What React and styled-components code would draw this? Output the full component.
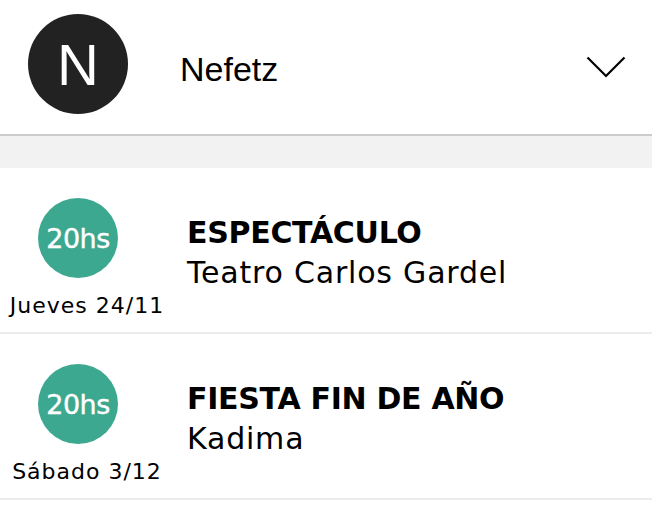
import styled, { createGlobalStyle } from "styled-components";

const GlobalStyle = createGlobalStyle`
  body {
    margin: 0;
    background: #ffffff;
    font-family: "DejaVu Sans", "Liberation Sans", sans-serif;
    color: #000;
  }
`;

const Page = styled.div`
  width: 652px;
  min-height: 522px;
  background: #fff;
  overflow: hidden;
`;

const Header = styled.header`
  height: 136px;
  box-sizing: border-box;
  display: flex;
  align-items: center;
  padding: 0 26px 0 28px;
  border-bottom: 2px solid #cccccc;
`;

const Avatar = styled.div`
  width: 100px;
  height: 100px;
  border-radius: 50%;
  background: #222222;
  color: #fff;
  font-family: "Liberation Sans", Arial, sans-serif;
  font-size: 58px;
  display: flex;
  align-items: center;
  justify-content: center;
  align-self: flex-start;
  margin-top: 14px;
  flex-shrink: 0;
`;

const HeaderName = styled.div`
  flex: 1;
  margin-left: 52px;
  padding-top: 4px;
  font-family: "Liberation Sans", Arial, sans-serif;
  font-size: 34px;
  line-height: 1;
`;

const Chevron = styled.svg`
  width: 40px;
  height: 22px;
  flex-shrink: 0;
`;

const Band = styled.div`
  height: 32px;
  background: #f2f2f2;
`;

const Row = styled.div`
  display: flex;
  align-items: center;
  height: 166px;
  box-sizing: border-box;
  border-bottom: 2px solid #ececec;
`;

const When = styled.div`
  width: 174px;
  align-self: flex-start;
  padding-top: 30px;
  display: flex;
  flex-direction: column;
  align-items: center;
`;

const Hour = styled.div`
  width: 80px;
  height: 80px;
  border-radius: 50%;
  background: #3da890;
  color: #fff;
  display: flex;
  align-items: center;
  justify-content: center;
  font-size: 27px;
  letter-spacing: -0.5px;
  -webkit-text-stroke: 0.4px #fff;
  margin-right: 18px;
`;

const Day = styled.div`
  margin-top: 15px;
  font-size: 22px;
  letter-spacing: 1px;
  line-height: 26px;
`;

const Info = styled.div`
  margin-left: 13px;
  padding-top: 5px;
  display: flex;
  flex-direction: column;
`;

const Title = styled.div`
  font-weight: bold;
  font-size: 30px;
  line-height: 40px;
  letter-spacing: -0.3px;
`;

const Place = styled.div`
  font-size: 30px;
  line-height: 40px;
  letter-spacing: 0.8px;
`;

const events = [
  { hour: "20hs", day: "Jueves 24/11", title: "ESPECTÁCULO", place: "Teatro Carlos Gardel" },
  { hour: "20hs", day: "Sábado 3/12", title: "FIESTA FIN DE AÑO", place: "Kadima" },
];

export default function App() {
  return (
    <Page>
      <GlobalStyle />
      <Header>
        <Avatar>N</Avatar>
        <HeaderName>Nefetz</HeaderName>
        <Chevron viewBox="0 0 40 22">
          <path d="M1.5 1.5 L20 20 L38.5 1.5" fill="none" stroke="#000" strokeWidth="2.2" />
        </Chevron>
      </Header>
      <Band />
      {events.map((e) => (
        <Row key={e.title}>
          <When>
            <Hour>{e.hour}</Hour>
            <Day>{e.day}</Day>
          </When>
          <Info>
            <Title>{e.title}</Title>
            <Place>{e.place}</Place>
          </Info>
        </Row>
      ))}
    </Page>
  );
}
